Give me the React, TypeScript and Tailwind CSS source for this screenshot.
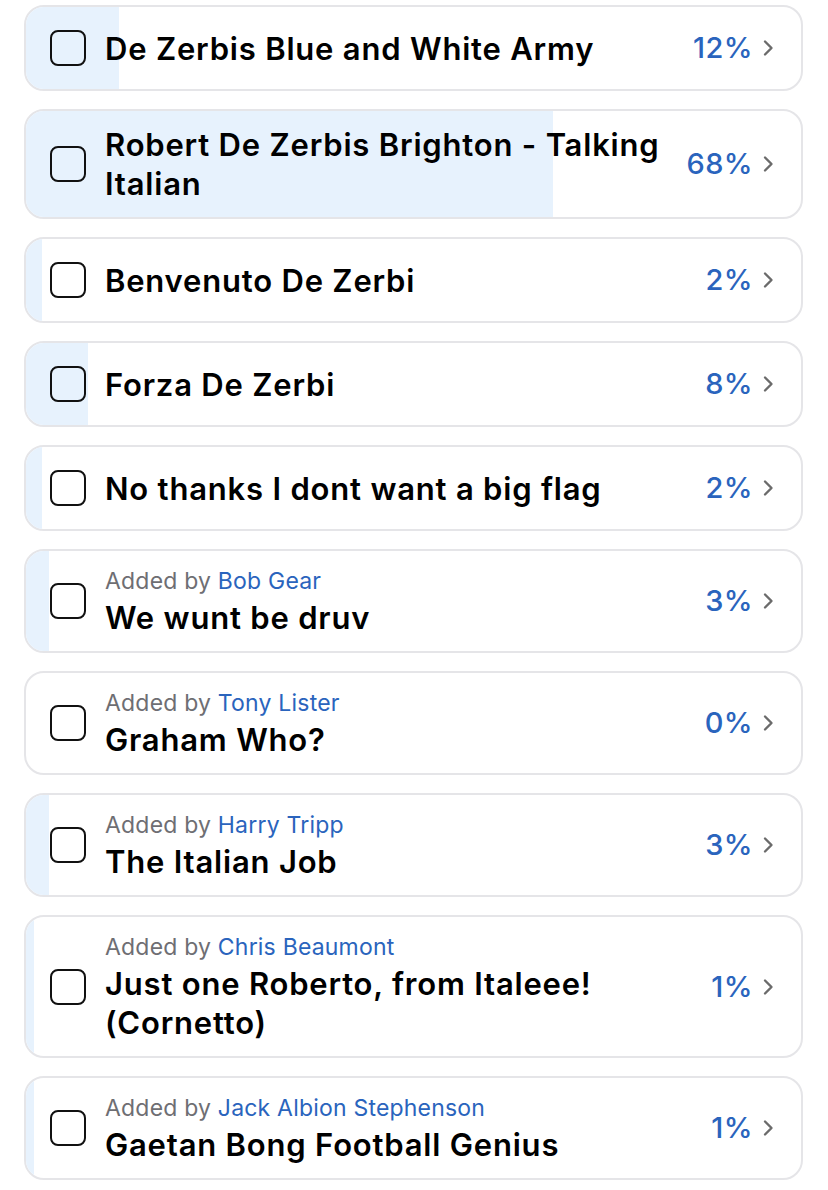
type PollOption = {
  id: number
  title: string
  percent: number
  addedBy?: string
}

const options: PollOption[] = [
  { id: 1, title: 'De Zerbis Blue and White Army', percent: 12 },
  { id: 2, title: 'Robert De Zerbis Brighton - Talking Italian', percent: 68 },
  { id: 3, title: 'Benvenuto De Zerbi', percent: 2 },
  { id: 4, title: 'Forza De Zerbi', percent: 8 },
  { id: 5, title: 'No thanks I dont want a big flag', percent: 2 },
  { id: 6, title: 'We wunt be druv', percent: 3, addedBy: 'Bob Gear' },
  { id: 7, title: 'Graham Who?', percent: 0, addedBy: 'Tony Lister' },
  { id: 8, title: 'The Italian Job', percent: 3, addedBy: 'Harry Tripp' },
  { id: 9, title: 'Just one Roberto, from Italeee! (Cornetto)', percent: 1, addedBy: 'Chris Beaumont' },
  { id: 10, title: 'Gaetan Bong Football Genius', percent: 1, addedBy: 'Jack Albion Stephenson' },
]

function Chevron() {
  return (
    <svg width="14" height="20" viewBox="0 0 14 20" fill="none" className="shrink-0">
      <path d="M4 3.5 L10.5 10 L4 16.5" stroke="#6b6b6b" strokeWidth="2.4" strokeLinecap="round" strokeLinejoin="round" />
    </svg>
  )
}

function OptionRow({ option }: { option: PollOption }) {
  return (
    <div className="relative min-h-[86px] overflow-hidden rounded-[20px] border-2 border-[#e5e5e8] bg-white">
      <div className="absolute inset-y-0 left-0 bg-[#e7f2fd]" style={{ width: `${option.percent}%` }} />
      <div className="relative flex min-h-[82px] items-center pl-[24px] pr-[26px]">
        <div className="h-[36px] w-[36px] shrink-0 rounded-[8px] border-[2.5px] border-[#111]" />
        <div className="ml-[19px] flex-1 py-[14px]">
          {option.addedBy && (
            <p className="text-[23px] leading-[33px] tracking-[0.2px] text-[#6e6e73]">
              Added by <span className="text-[#2a64bd]">{option.addedBy}</span>
            </p>
          )}
          <p className="text-[31px] font-semibold leading-[39px] tracking-[0.8px] text-black">{option.title}</p>
        </div>
        <div className="ml-4 flex shrink-0 items-center gap-[8px]">
          <span className="text-[29px] font-medium tracking-[0.4px] text-[#2a64bd]">{option.percent}%</span>
          <Chevron />
        </div>
      </div>
    </div>
  )
}

export default function App() {
  return (
    <div
      className="flex w-[828px] flex-col gap-[18px] bg-white pl-[24px] pr-[25px] pt-[5px]"
      style={{ fontFamily: 'Inter, "Noto Sans", sans-serif' }}
    >
      {options.map((option) => (
        <OptionRow key={option.id} option={option} />
      ))}
    </div>
  )
}
